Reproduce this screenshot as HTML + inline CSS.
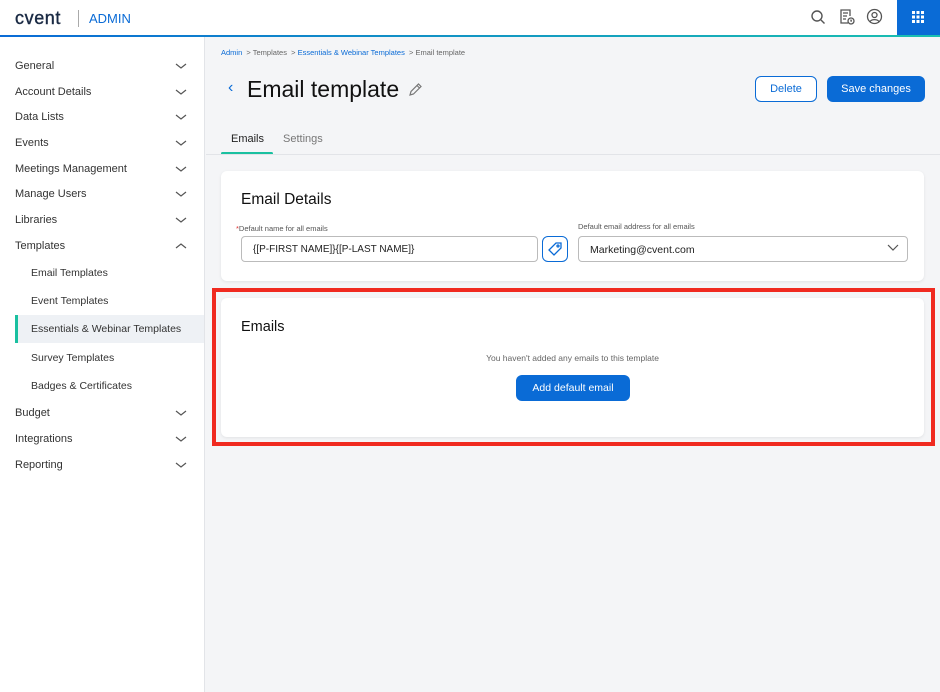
<!DOCTYPE html><html><head><style>
*{box-sizing:border-box;margin:0;padding:0}
body{width:940px;height:692px;font-family:"Liberation Sans",sans-serif;background:#f4f5f7;position:relative;overflow:hidden;color:#1a1a1a}
.abs{position:absolute}
.hdr{left:0;top:0;width:940px;height:35px;background:#fff}
.line{left:0;top:35px;width:940px;height:2px;background:linear-gradient(90deg,#0a6bd6,#1ac0b0)}
.side{left:0;top:37px;width:205px;height:655px;background:#ffffff;border-right:1px solid #e2e4e8}
.it{position:absolute;left:15px;font-size:11px;color:#333}
.sub{left:31px}
.card{background:#fff;border-radius:6px;box-shadow:0 1px 3px rgba(0,0,0,.08)}
.btn{border-radius:6px;font-size:11px;display:flex;align-items:center;justify-content:center}
</style></head><body>
<div class="abs hdr"></div>
<div class="abs" style="left:15px;top:8px;font-size:18px;color:#1a2a44;letter-spacing:0.6px;-webkit-text-stroke:0.4px #1a2a44">cvent</div>
<div class="abs" style="left:78px;top:10px;width:1px;height:17px;background:#aaa"></div>
<div class="abs" style="left:89px;top:11px;font-size:13px;color:#0a6bd6">ADMIN</div>
<svg class="abs" style="left:810px;top:9px" width="16" height="16" viewBox="0 0 16 16" fill="none" stroke="#555" stroke-width="1.4"><circle cx="7" cy="7" r="5"/><path d="M11 11l3.5 3.5"/></svg>
<svg class="abs" style="left:839px;top:8px" width="16" height="17" viewBox="0 0 16 17" fill="none" stroke="#555" stroke-width="1.3"><path d="M9 15H2V2h9v6"/><path d="M4 5h5M4 8h4M4 11h3"/><circle cx="12" cy="13" r="3"/><path d="M12 11.5V13h1"/></svg>
<svg class="abs" style="left:866px;top:8px" width="17" height="17" viewBox="0 0 17 17" fill="none" stroke="#555" stroke-width="1.3"><circle cx="8.5" cy="8.5" r="7"/><circle cx="8.5" cy="7" r="2.5"/><path d="M4 13.5c2-2.5 7-2.5 9 0"/></svg>
<div class="abs" style="left:897px;top:0;width:43px;height:35px;background:#0a6bd6"></div>
<svg class="abs" style="left:912px;top:11px" width="12" height="12" viewBox="0 0 12 12" fill="#fff"><rect x="0" y="0" width="3" height="3"/><rect x="4.5" y="0" width="3" height="3"/><rect x="9" y="0" width="3" height="3"/><rect x="0" y="4.5" width="3" height="3"/><rect x="4.5" y="4.5" width="3" height="3"/><rect x="9" y="4.5" width="3" height="3"/><rect x="0" y="9" width="3" height="3"/><rect x="4.5" y="9" width="3" height="3"/><rect x="9" y="9" width="3" height="3"/></svg>
<div class="abs line"></div>
<div class="abs side">
<div class="abs" style="left:15px;top:278px;width:189px;height:28px;background:#eef1f5"></div>
<div class="abs" style="left:15px;top:278px;width:3px;height:28px;background:#1ac0a0"></div>
</div>
<div class="abs" style="left:0;top:38px;width:205px">
<div class="it" style="top:22px">General</div>
<div class="it" style="top:48px">Account Details</div>
<div class="it" style="top:73px">Data Lists</div>
<div class="it" style="top:99px">Events</div>
<div class="it" style="top:125px">Meetings Management</div>
<div class="it" style="top:150px">Manage Users</div>
<div class="it" style="top:176px">Libraries</div>
<div class="it" style="top:202px">Templates</div>
<div class="it sub" style="top:229px;font-size:10.5px">Email Templates</div>
<div class="it sub" style="top:257px;font-size:10.5px">Event Templates</div>
<div class="it sub" style="top:285px;font-size:10.5px">Essentials &amp; Webinar Templates</div>
<div class="it sub" style="top:314px;font-size:10.5px">Survey Templates</div>
<div class="it sub" style="top:342px;font-size:10.5px">Badges &amp; Certificates</div>
<div class="it" style="top:369px">Budget</div>
<div class="it" style="top:395px">Integrations</div>
<div class="it" style="top:421px">Reporting</div>
</div>
<svg class="abs" style="left:0;top:0" width="205" height="692" fill="none" stroke="#555" stroke-width="1.2">
<path d="M176 64l5 4 5-4"/>
<path d="M176 90l5 4 5-4"/><path d="M176 115l5 4 5-4"/><path d="M176 141l5 4 5-4"/><path d="M176 167l5 4 5-4"/><path d="M176 192l5 4 5-4"/><path d="M176 218l5 4 5-4"/><path d="M176 248l5-4 5 4"/><path d="M176 411l5 4 5-4"/><path d="M176 437l5 4 5-4"/><path d="M176 463l5 4 5-4"/>
</svg>
<div class="abs" style="left:221px;top:48px;font-size:7.5px;color:#666;white-space:nowrap"><span style="color:#0a6bd6">Admin</span> &nbsp;&gt; Templates &nbsp;&gt; <span style="color:#0a6bd6">Essentials &amp; Webinar Templates</span> &nbsp;&gt; Email template</div>
<div class="abs" style="left:228px;top:79px;font-size:16px;color:#0a6bd6">‹</div>
<div class="abs" style="left:247px;top:76px;font-size:23px;color:#111">Email template</div>
<svg class="abs" style="left:408px;top:82px" width="15" height="15" viewBox="0 0 15 15" fill="none" stroke="#777" stroke-width="1.2"><path d="M2 13l1-3.5L10.5 2l2.5 2.5L5.5 12z M9 3.5l2.5 2.5"/></svg>
<div class="abs btn" style="left:755px;top:76px;width:62px;height:26px;border:1px solid #0a6bd6;color:#0a6bd6;background:#fff">Delete</div>
<div class="abs btn" style="left:827px;top:76px;width:98px;height:26px;background:#0a6bd6;color:#fff">Save changes</div>
<div class="abs" style="left:231px;top:133px;font-size:11px;color:#222">Emails</div>
<div class="abs" style="left:283px;top:133px;font-size:11px;color:#777">Settings</div>
<div class="abs" style="left:221px;top:152px;width:52px;height:3px;background:#1ac0a0;border-radius:2px"></div>
<div class="abs" style="left:206px;top:154px;width:734px;height:1px;background:#e2e4e8"></div>
<div class="abs card" style="left:221px;top:171px;width:703px;height:110px"></div>
<div class="abs" style="left:241px;top:191px;font-size:15.5px;color:#111">Email Details</div>
<div class="abs" style="left:236px;top:224px;font-size:7.5px;color:#555"><span style="color:#d33">*</span>Default name for all emails</div>
<div class="abs" style="left:578px;top:222px;font-size:7.5px;color:#555">Default email address for all emails</div>
<div class="abs" style="left:241px;top:236px;width:297px;height:26px;border:1px solid #bbb;border-radius:4px;background:#fff;font-size:10px;padding:7px 11px;color:#222">{[P-FIRST NAME]}{[P-LAST NAME]}</div>
<div class="abs" style="left:542px;top:236px;width:26px;height:26px;border:1px solid #0a6bd6;border-radius:6px"></div>
<svg class="abs" style="left:547px;top:241px" width="16" height="16" viewBox="0 0 16 16" fill="none" stroke="#0a6bd6" stroke-width="1.3"><path d="M9 2h5v5L7 14 2 9z"/><circle cx="11" cy="5" r="1"/></svg>
<div class="abs" style="left:578px;top:236px;width:330px;height:26px;border:1px solid #bbb;border-radius:4px;background:#fff;font-size:10.5px;padding:7px 11px;color:#222">Marketing@cvent.com</div>
<svg class="abs" style="left:887px;top:244px" width="12" height="8" fill="none" stroke="#555" stroke-width="1.2"><path d="M1 1l5 5 5-5"/></svg>
<div class="abs" style="left:212px;top:288px;width:723px;height:158px;border:4px solid #f02a20"></div>
<div class="abs card" style="left:221px;top:298px;width:703px;height:139px"></div>
<div class="abs" style="left:241px;top:319px;font-size:14.5px;color:#111">Emails</div>
<div class="abs" style="left:221px;top:353px;width:703px;text-align:center;font-size:8.5px;color:#666">You haven't added any emails to this template</div>
<div class="abs btn" style="left:516px;top:375px;width:114px;height:26px;background:#0a6bd6;color:#fff;font-size:10.5px">Add default email</div>
</body></html>
